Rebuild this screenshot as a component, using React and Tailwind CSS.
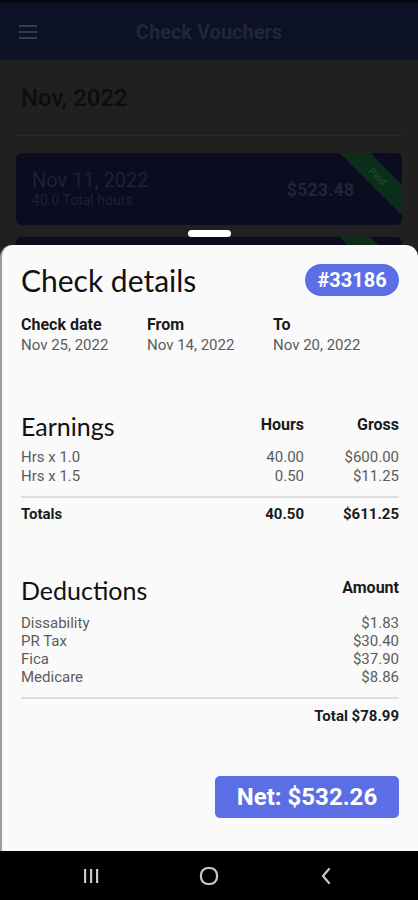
import React from "react";

const roboto = { fontFamily: "Roboto, 'Liberation Sans', sans-serif" };
const lato = { fontFamily: "Lato, 'Open Sans', sans-serif" };

function Row({ label, a, b, bold }) {
  return (
    <div className={`flex items-center ${bold ? "font-bold text-[#1a1a1a] text-[15px] leading-[20px]" : "text-[#5c5c5c] text-[15px] leading-[19px]"}`}>
      <div className="flex-1">{label}</div>
      {a !== undefined && <div className="w-[80px] text-right">{a}</div>}
      <div className="w-[95px] text-right">{b}</div>
    </div>
  );
}

export default function App() {
  return (
    <div className="w-[418px] h-[900px] flex flex-col bg-black overflow-hidden" style={roboto}>
      <div className="relative flex-1 bg-[#202020] overflow-hidden">
        {/* app bar */}
        <div className="h-[60px] bg-[#0c1126] border-t-[3px] border-[#070910] flex items-center px-[19px] relative">
          <div className="flex flex-col gap-[4px]">
            <div className="w-[18px] h-[2px] bg-[#363b4e]" />
            <div className="w-[18px] h-[2px] bg-[#363b4e]" />
            <div className="w-[18px] h-[2px] bg-[#363b4e]" />
          </div>
          <div className="flex-1 text-center text-[20px] font-bold text-[#20263c] pr-[18px]">Check Vouchers</div>
        </div>
        <div className="px-[21px] pt-[23px] text-[24px] leading-[30px] font-medium text-[#0d0d0d]">Nov, 2022</div>
        <div className="mx-[16px] mt-[22px] h-[1px] bg-[#2a2a2a]" />
        <div className="px-[16px] pt-[17px] flex flex-col gap-[12px]">
          <div className="relative h-[72px] rounded-[6px] bg-[#0a0c1f] overflow-hidden flex items-center pl-[16px] pr-[48px]">
            <div className="flex-1">
              <div className="text-[20px] leading-[22px] text-[#1e2236]">Nov 11, 2022</div>
              <div className="text-[14px] leading-[18px] text-[#1d2134]">40.0 Total hours</div>
            </div>
            <div className="text-[18px] font-bold text-[#212537]">$523.48</div>
            <div className="absolute top-[12px] right-[-26px] w-[100px] h-[22px] rotate-45 bg-[#0a2e19] flex items-center justify-center text-[10px] font-bold text-[#1c4529]">
              Paid
            </div>
          </div>
          <div className="relative h-[72px] rounded-[6px] bg-[#0a0c1f] overflow-hidden">
            <div className="absolute top-[12px] right-[-26px] w-[100px] h-[22px] rotate-45 bg-[#0a2e19]" />
          </div>
        </div>

        {/* handle */}
        <div className="absolute left-[188px] top-[230px] w-[43px] h-[7px] rounded-full bg-white" />

        {/* bottom sheet */}
        <div className="absolute left-0 right-0 top-[245px] bottom-0 bg-[#fafafa] rounded-t-[12px] border-l-2 border-[#9c9c9c] pl-[19px] pr-[19px]">
          <div className="pt-[17px] flex items-center justify-between">
            <div className="text-[30px] leading-[36px] text-[#111]" style={lato}>Check details</div>
            <div className="h-[32px] w-[94px] rounded-full bg-[#5b6ee6] flex items-center justify-center text-white font-bold text-[20px]">#33186</div>
          </div>
          <div className="mt-[17px] flex">
            {[
              ["Check date", "Nov 25, 2022"],
              ["From", "Nov 14, 2022"],
              ["To", "Nov 20, 2022"],
            ].map(([l, v]) => (
              <div key={l} className="w-[126px]">
                <div className="text-[16px] leading-[20px] font-bold text-[#1a1a1a]">{l}</div>
                <div className="text-[15px] leading-[20px] text-[#5c5c5c]">{v}</div>
              </div>
            ))}
          </div>

          <div className="mt-[56px] flex items-center">
            <div className="flex-1 text-[25px] leading-[30px] text-[#111]" style={lato}>Earnings</div>
            <div className="w-[80px] text-right text-[16px] font-bold text-[#1a1a1a] pb-[3px]">Hours</div>
            <div className="w-[95px] text-right text-[16px] font-bold text-[#1a1a1a] pb-[3px]">Gross</div>
          </div>
          <div className="mt-[7px]">
            <Row label="Hrs x 1.0" a="40.00" b="$600.00" />
            <Row label="Hrs x 1.5" a="0.50" b="$11.25" />
          </div>
          <div className="mt-[10px] h-[2px] bg-[#dedede]" />
          <div className="mt-[6px]">
            <Row label="Totals" a="40.50" b="$611.25" bold />
          </div>

          <div className="mt-[51px] flex items-center">
            <div className="flex-1 text-[25px] leading-[30px] text-[#111]" style={lato}>Deductions</div>
            <div className="text-right text-[16px] font-bold text-[#1a1a1a] pb-[4px]">Amount</div>
          </div>
          <div className="mt-[9px] text-[15px] leading-[18px] text-[#5c5c5c]">
            {[
              ["Dissability", "$1.83"],
              ["PR Tax", "$30.40"],
              ["Fica", "$37.90"],
              ["Medicare", "$8.86"],
            ].map(([l, v]) => (
              <div key={l} className="flex justify-between">
                <span>{l}</span>
                <span>{v}</span>
              </div>
            ))}
          </div>
          <div className="mt-[11px] h-[2px] bg-[#dedede]" />
          <div className="mt-[7px] text-right text-[15px] leading-[20px] font-bold text-[#1a1a1a]">Total $78.99</div>

          <div className="mt-[50px] flex justify-end">
            <div className="h-[42px] w-[184px] rounded-[5px] bg-[#5b6ee6] flex items-center justify-center text-white font-bold text-[24px]">Net: $532.26</div>
          </div>
        </div>
      </div>

      {/* nav bar */}
      <div className="h-[49px] bg-black flex items-center">
        <svg width="18" height="16" viewBox="0 0 18 16" className="ml-[82px]">
          <rect x="2" y="1" width="2.2" height="14" fill="#c8c8c8" />
          <rect x="8" y="1" width="2.2" height="14" fill="#c8c8c8" />
          <rect x="14" y="1" width="2.2" height="14" fill="#c8c8c8" />
        </svg>
        <svg width="20" height="20" viewBox="0 0 20 20" className="ml-[99px]">
          <rect x="2" y="2" width="16" height="16" rx="7" fill="none" stroke="#c8c8c8" strokeWidth="2.2" />
        </svg>
        <svg width="14" height="18" viewBox="0 0 14 18" className="ml-[100px]">
          <path d="M10 2 L4 9 L10 16" fill="none" stroke="#c8c8c8" strokeWidth="2.2" strokeLinecap="round" strokeLinejoin="round" />
        </svg>
      </div>
    </div>
  );
}
